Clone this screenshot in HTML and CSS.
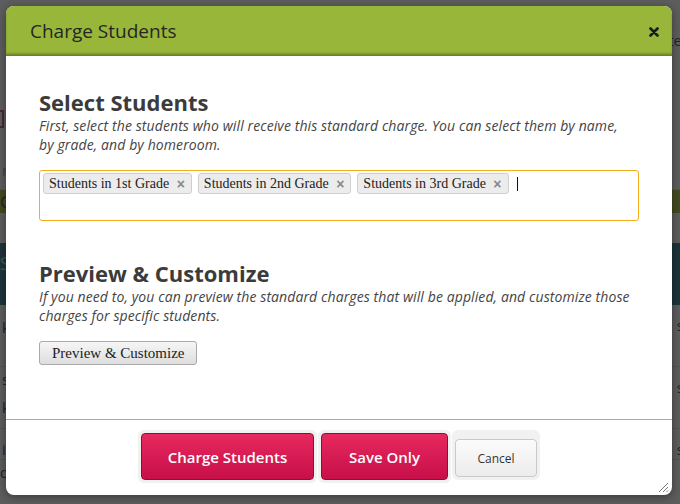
FILE: index.html
```html
<!DOCTYPE html>
<html>
<head>
<meta charset="utf-8">
<link rel="stylesheet" href="styles.css">
</head>
<body>
<div class="page">
  <div class="bg-top"><span class="bg-te">te</span></div>
  <div class="bg-row bg-r1"><span class="bg-pink"></span></div>
  <div class="bg-row bg-r2"><span>r</span></div>
  <div class="bg-olive"><span>C</span></div>
  <div class="bg-teal"><span>S</span></div>
  <div class="bg-row bg-r3"><span>k</span><span class="bg-right">s</span></div>
  <div class="bg-row bg-r4"><span>s</span><span class="bg-right">s</span></div>
  <div class="bg-row bg-r5"><span>k</span></div>
  <div class="bg-row bg-r6"><span>i</span><span class="bg-right">s</span></div>
  <div class="bg-table">
    <span class="c1">des</span><span class="c2">4-6</span><span class="c3"></span><span class="c4"></span>
  </div>
  <div class="overlay"></div>

  <div class="modal">
    <div class="modal-header">
      <h1 class="modal-title">Charge Students</h1>
      <svg class="close" width="10" height="10" viewBox="0 0 10 10"><path d="M1.5 1.5 L8.5 8.5 M8.5 1.5 L1.5 8.5" stroke="#1a1a1a" stroke-width="2.6" stroke-linecap="round"/></svg>
    </div>
    <div class="modal-body">
      <h2 class="section-title">Select Students</h2>
      <p class="section-desc">First, select the students who will receive this standard charge. You can select them by name, by grade, and by homeroom.</p>
      <div class="tag-input">
        <span class="tag">Students in 1st Grade <span class="tag-x">×</span></span>
        <span class="tag">Students in 2nd Grade <span class="tag-x">×</span></span>
        <span class="tag">Students in 3rd Grade <span class="tag-x">×</span></span>
        <span class="caret"></span>
      </div>
      <h2 class="section-title second">Preview &amp; Customize</h2>
      <p class="section-desc">If you need to, you can preview the standard charges that will be applied, and customize those charges for specific students.</p>
      <button class="btn-plain">Preview &amp; Customize</button>
    </div>
    <div class="modal-footer">
      <span class="ring"><button class="btn-primary wide">Charge Students</button></span>
      <span class="ring"><button class="btn-primary">Save Only</button></span>
      <span class="ring"><button class="btn-cancel">Cancel</button></span>
    </div>
    <svg class="grip" width="12" height="12" viewBox="0 0 12 12"><path d="M11 2 L2 11 M11 6 L6 11 M11 9.5 L9.5 11" stroke="#777" stroke-width="1"/></svg>
  </div>
</div>
</body>
</html>
```

FILE: styles.css
```css
* { box-sizing: border-box; }
html, body { margin: 0; padding: 0; }
body {
  width: 680px;
  height: 504px;
  overflow: hidden;
  font-family: "Open Sans", "Liberation Sans", sans-serif;
  background: #fff;
}
.page {
  position: relative;
  width: 680px;
  height: 504px;
  overflow: hidden;
  background: #fff;
  color: #222;
}
/* backdrop content */
.bg-top { height: 90px; position: relative; }
.bg-te { position: absolute; right: -2px; top: 30px; font-size: 15px; color: #333; }
.bg-row { height: 20px; position: relative; font-size: 15px; color: #333; padding-left: 2px; }
.bg-r1 { height: 40px; }
.bg-pink { position: absolute; left: -4px; top: 20px; width: 8px; height: 18px; border: 2px solid #b8425e; }
.bg-r2 { height: 60px; padding-top: 30px; color: #999; border-bottom: 1px dashed #ddd; }
.bg-olive { height: 23px; background: #a6b62a; font-size: 17px; color: #333; line-height: 23px; }
.bg-teal { height: 62px; margin-top: 30px; background: #1a6c80; color: #8fc; font-size: 18px; line-height: 40px; }
.bg-r3 { height: 62px; padding-top: 12px; border-bottom: 1px solid #ddd; }
.bg-r4 { height: 30px; padding-top: 2px; }
.bg-r5 { height: 32px; border-bottom: 1px solid #ddd; }
.bg-r6 { height: 30px; padding-top: 10px; }
.bg-right { position: absolute; right: -4px; top: 10px; }
.bg-table { display: flex; height: 30px; font-size: 15px; color: #333; border-top: 1px solid #ddd; }
.bg-table span { border-right: 1px solid #ccc; padding: 2px 8px; }
.bg-table .c1 { width: 118px; padding-left: 0; }
.bg-table .c2 { width: 251px; }
.bg-table .c3 { width: 113px; }
.overlay {
  position: absolute; inset: 0;
  background: rgba(30, 30, 30, 0.72);
}

/* modal */
.modal {
  position: absolute;
  left: 6px; top: 6px;
  width: 666px; height: 489px;
  background: #fff;
  border-radius: 8px;
  overflow: hidden;
  display: flex;
  flex-direction: column;
  box-shadow: 0 2px 10px rgba(0,0,0,0.4);
}
.modal-header {
  height: 50px;
  flex: none;
  background: #98b73a;
  display: flex;
  align-items: center;
  justify-content: space-between;
  padding: 0 13px 0 24px;
  box-shadow: inset 0 -3px 3px -1px rgba(60, 70, 20, 0.55);
}
.modal-title {
  margin: 0;
  font-size: 19px;
  font-weight: 400;
  color: #262626;
  line-height: 24px;
}
.close { display: block; margin-top: 2px; }
.modal-body {
  flex: 1;
  padding: 33px 33px 0 33px;
  border-bottom: 1px solid #a9a9a9;
}
.section-title {
  margin: 0;
  font-size: 22px;
  line-height: 27px;
  font-weight: 700;
  color: #3b3b3b;
}
.section-title.second { margin-top: 39px; }
.section-desc {
  margin: 0;
  padding-right: 5px;
  font-size: 14px;
  line-height: 19px;
  letter-spacing: 0.1px;
  font-style: italic;
  color: #444;
}
.tag-input {
  margin-top: 16px;
  height: 51px;
  border: 1px solid #f5ad1e;
  border-radius: 3px;
  padding: 2px 3px;
  display: flex;
  align-items: flex-start;
  gap: 6px;
}
.tag {
  display: inline-flex;
  align-items: center;
  height: 21px;
  padding: 0 6px 0 5px;
  background: #ececec;
  border: 1px solid #cfcfcf;
  border-radius: 3px;
  font-family: "Liberation Serif", "Times New Roman", serif;
  font-size: 14px;
  color: #222;
  white-space: pre;
}
.tag-x {
  font-family: "Liberation Sans", sans-serif;
  font-weight: 700;
  color: #888;
  font-size: 14px;
  margin-left: 4px;
}
.caret {
  width: 1px; height: 14px; background: #111; margin-top: 4px; margin-left: 2px;
}
.btn-plain {
  margin-top: 16px;
  height: 24px;
  padding: 0 12px;
  font-family: "Liberation Serif", "Times New Roman", serif;
  font-size: 15px;
  color: #222;
  background: linear-gradient(#f6f6f6, #dedede);
  border: 1px solid #aaa;
  border-radius: 3px;
}
.modal-footer {
  height: 75px;
  flex: none;
  display: flex;
  justify-content: center;
  align-items: flex-start;
  padding-top: 10px;
  gap: 1px;
}
.ring {
  display: inline-block;
  padding: 3px;
  background: #f1f1f1;
  border-radius: 6px;
}
.btn-primary {
  display: block;
  height: 47px;
  width: 127px;
  font-family: "Open Sans", "Liberation Sans", sans-serif;
  font-size: 15px;
  font-weight: 600;
  color: #fff;
  background: linear-gradient(#e6295f, #c80f49);
  border: 1px solid #7a1a30;
  border-radius: 4px;
}
.btn-primary.wide { width: 173px; }
.btn-cancel {
  display: block;
  margin-top: 6px;
  height: 38px;
  width: 82px;
  font-family: "Open Sans", "Liberation Sans", sans-serif;
  font-size: 12px;
  color: #333;
  background: linear-gradient(#fbfbfb, #ececec);
  border: 1px solid #c9c9c9;
  border-radius: 4px;
}
.grip { position: absolute; right: 3px; bottom: 2px; }
```
